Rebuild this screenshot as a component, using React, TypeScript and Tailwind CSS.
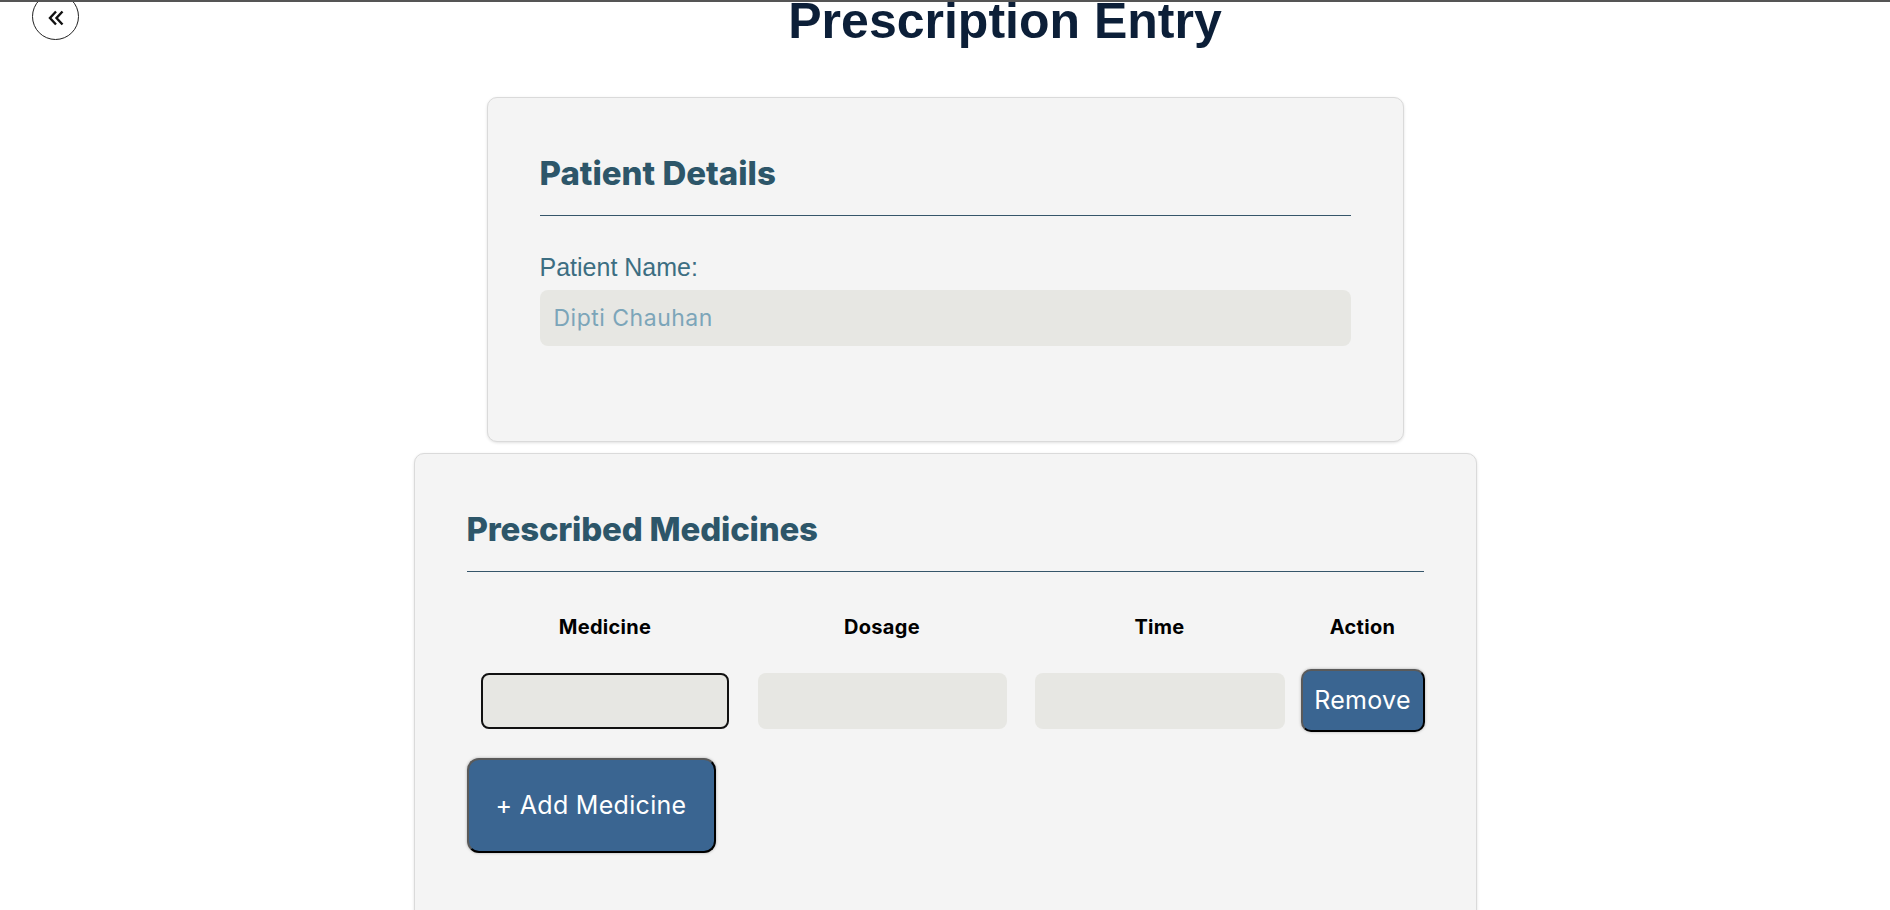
import React from "react";

const poppins = "font-['Inter',sans-serif]";

function BackIcon() {
  return (
    <svg width="18" height="16" viewBox="0 0 18 16" fill="none" stroke="#111" strokeWidth="2.4" strokeLinecap="butt" strokeLinejoin="miter">
      <path d="M9 1.5 L3 8 L9 14.5" />
      <path d="M15.5 1.5 L9.5 8 L15.5 14.5" />
    </svg>
  );
}

export default function App() {
  return (
    <div className="min-h-[910px] bg-white">
      <div className="relative z-10 h-[2px] bg-[#555555]" />
      <div className="flex items-start">
        <button className="ml-[32px] -mt-[9px] flex h-[47px] w-[47px] shrink-0 items-center justify-center rounded-full border border-[#222] bg-white pt-[3px]">
          <BackIcon />
        </button>
        <h1 className="flex-1 pl-[41px] text-center font-['Liberation_Sans',Arial,sans-serif] text-[50px] font-bold leading-[38px] text-[#0c1f38]">
          Prescription Entry
        </h1>
      </div>

      <div className="mx-auto mt-[57px] w-[917px] rounded-[10px] border border-[#dadada] bg-[#f4f4f4] px-[52px] pt-[57px] pb-[95px] shadow-[0_1px_3px_rgba(0,0,0,0.12)]">
        <h2 className={`${poppins} text-[33px] font-extrabold leading-[36px] text-[#2d5669]`}>Patient Details</h2>
        <div className="mt-[24px] h-px bg-[#36556a]" />
        <div className="mt-[36px] font-['Liberation_Sans',Arial,sans-serif] text-[25px] leading-[30px] text-[#3c6e82]">Patient Name:</div>
        <div className={`mt-[8px] flex h-[56px] items-center rounded-[8px] bg-[#e7e7e3] pl-[14px] ${poppins} text-[23px] tracking-[0.5px] text-[#7ca5b9]`}>
          Dipti Chauhan
        </div>
      </div>

      <div className="mx-auto mt-[11px] w-[1063px] rounded-[10px] border border-[#dadada] bg-[#f4f4f4] px-[52px] pt-[57px] pb-[80px] shadow-[0_1px_3px_rgba(0,0,0,0.12)]">
        <h2 className={`${poppins} text-[33px] font-extrabold leading-[36px] tracking-[-0.2px] text-[#2d5669]`}>Prescribed Medicines</h2>
        <div className="mt-[24px] h-px bg-[#36556a]" />
        <div className={`mt-[43px] grid grid-cols-[277px_277px_278px_128px] ${poppins} text-[20px] font-bold leading-[24px] tracking-[0.3px] text-black`}>
          <div className="text-center">Medicine</div>
          <div className="text-center">Dosage</div>
          <div className="text-center">Time</div>
          <div className="text-center">Action</div>
        </div>
        <div className="mt-[30px] grid h-[63px] grid-cols-[277px_277px_278px_128px] items-center">
          <div className="flex justify-center">
            <div className="h-[56px] w-[248px] rounded-[8px] border-2 border-[#111] bg-[#e7e7e3]" />
          </div>
          <div className="flex justify-center">
            <div className="h-[56px] w-[249px] rounded-[8px] bg-[#e7e7e3]" />
          </div>
          <div className="flex justify-center">
            <div className="h-[56px] w-[250px] rounded-[8px] bg-[#e7e7e3]" />
          </div>
          <div className="flex justify-center">
            <button className={`h-[63px] w-[124px] rounded-[10px] border-2 border-t-[#5a5a5a] border-l-[#5a5a5a] border-b-black border-r-black bg-[#3a6591] ${poppins} text-[25px] tracking-[0.3px] text-white shadow-[0_0_3px_rgba(0,0,0,0.3)]`}>
              Remove
            </button>
          </div>
        </div>
        <button className={`mt-[26px] h-[95px] w-[249px] rounded-[12px] border-2 border-t-[#5a5a5a] border-l-[#5a5a5a] border-b-black border-r-black bg-[#3a6591] ${poppins} text-[25px] tracking-[0.3px] text-white shadow-[0_0_3px_rgba(0,0,0,0.3)]`}>
          + Add Medicine
        </button>
      </div>
    </div>
  );
}
